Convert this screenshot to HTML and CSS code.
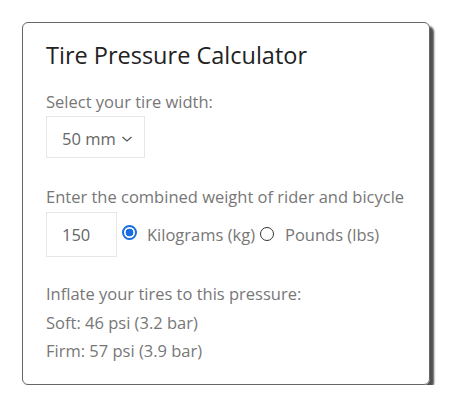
FILE: index.html
```html
<!DOCTYPE html>
<html>
<head>
<meta charset="utf-8">
<link rel="stylesheet" href="styles.css">
</head>
<body>
<div class="card">
  <h1 class="title">Tire Pressure Calculator</h1>
  <div class="label first">Select your tire width:</div>
  <div class="select"><span>50 mm</span><svg class="chev" width="12" height="8" viewBox="0 0 12 8"><path d="M1.5 2 L6 6 L10.5 2" fill="none" stroke="#555" stroke-width="1.3"/></svg></div>
  <div class="label gap">Enter the combined weight of rider and bicycle</div>
  <div class="row">
    <div class="input">150</div>
    <span class="radio on"></span><span class="opt">Kilograms (kg)</span>
    <span class="radio off"></span><span class="opt">Pounds (lbs)</span>
  </div>
  <div class="results">
    <div class="res">Inflate your tires to this pressure:</div>
    <div class="res">Soft: 46 psi (3.2 bar)</div>
    <div class="res">Firm: 57 psi (3.9 bar)</div>
  </div>
</div>
</body>
</html>
```
FILE: styles.css
```css
html, body { margin: 0; padding: 0; background: #fff; }
body { padding: 22px 0 0 22px; font-family: "Open Sans", sans-serif; }
.card {
  box-sizing: border-box; width: 408px; height: 363px;
  border: 1px solid #666; border-radius: 6px;
  box-shadow: 4px 4px 2px #505050;
  padding: 16px 0 0 23px;
}
.title { margin: 0; font-size: 23.5px; font-weight: 400; color: #222; line-height: 32px; }
.label { color: #777; font-size: 16.5px; line-height: 22px; }
.first { margin-top: 20px; }
.select { display: flex; align-items: center; width: 99px; height: 42px; box-sizing: border-box; border: 1px solid #e6e6e6; padding: 3px 0 0 15px; color: #666; font-size: 16.5px; line-height: 22px; margin-top: 3px; }
.chev { margin-left: 5px; margin-top: 0; }
.gap { margin-top: 28px; }
.row { display: flex; align-items: center; margin-top: 4px; height: 45px; }
.input { width: 71px; height: 45px; box-sizing: border-box; border: 1px solid #e6e6e6; padding-left: 15px; display: flex; align-items: center; color: #666; font-size: 16.5px; line-height: 22px; }
.radio { border-radius: 50%; box-sizing: border-box; flex: none; }
.radio.on { width: 15px; height: 15px; border: 2px solid #1a6fe0; background: radial-gradient(circle, #1a6fe0 0 3.6px, #fff 4.2px); margin: 0 10px 5px 5px; }
.radio.off { width: 14px; height: 14px; border: 1.3px solid #333; background: #fff; margin: 0 11px 1px 5px; }
.opt { color: #777; font-size: 16.5px; line-height: 22px; }
.results { margin-top: 23px; }
.res { color: #777; font-size: 16.5px; line-height: 28.5px; }
```
